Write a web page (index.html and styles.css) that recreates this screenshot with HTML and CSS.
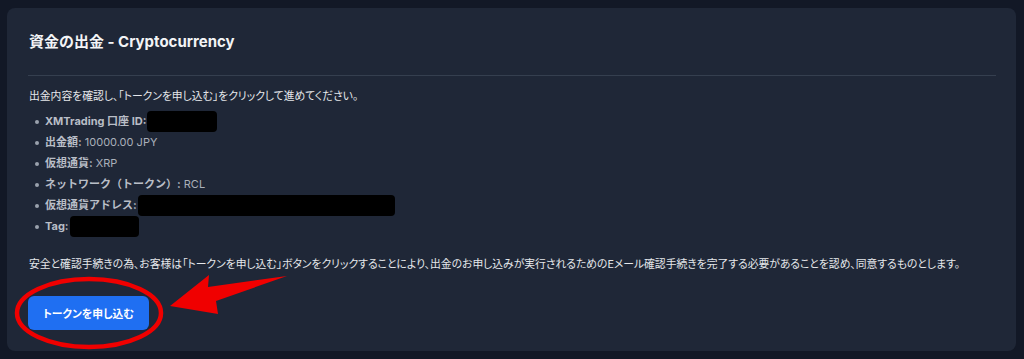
FILE: index.html
```html
<!DOCTYPE html>
<html lang="ja">
<head>
<meta charset="utf-8">
<title>資金の出金 - Cryptocurrency</title>
<link rel="stylesheet" href="styles.css">
</head>
<body>
<div class="page">
  <section class="card">
    <h2 class="title">資金の出金 - Cryptocurrency</h2>
    <hr class="sep">
    <p class="intro">出金内容を確認し、「トークンを申し込む」をクリックして進めてください。</p>
    <ul class="details">
      <li><b>XMTrading 口座 ID:</b><span class="redact w-id"></span></li>
      <li><b>出金額:</b> 10000.00 JPY</li>
      <li><b>仮想通貨:</b> XRP</li>
      <li><b>ネットワーク（トークン）:</b> RCL</li>
      <li><b>仮想通貨アドレス:</b><span class="redact w-addr"></span></li>
      <li><b>Tag:</b><span class="redact w-tag"></span></li>
    </ul>
    <p class="note">安全と確認手続きの為、お客様は「トークンを申し込む」ボタンをクリックすることにより、出金のお申し込みが実行されるためのEメール確認手続きを完了する必要があることを認め、同意するものとします。</p>
    <button class="btn" type="button">トークンを申し込む</button>
  </section>
  <svg class="annot" width="1024" height="359" viewBox="0 0 1024 359" aria-hidden="true">
    <ellipse cx="89" cy="313" rx="72" ry="34" fill="none" stroke="#f00000" stroke-width="4.5"/>
    <polygon points="170,306 209,275 208,287 287,276 216,301 218,314" fill="#f00000"/>
  </svg>
</div>
</body>
</html>
```

FILE: styles.css
```css
html, body {
  margin: 0;
  padding: 0;
  background: #121826;
}
.page {
  position: relative;
  width: 1024px;
  height: 359px;
  padding-top: 8px;
  box-sizing: border-box;
  font-family: Inter, "Noto Sans CJK JP", sans-serif;
}
.card {
  margin-left: 7px;
  width: 1009px;
  height: 343px;
  box-sizing: border-box;
  background: #1f2737;
  border-radius: 8px;
  padding: 0 20px 0 21px;
  overflow: hidden;
}
.title {
  margin: 24px 0 0 1px;
  font-size: 15px;
  line-height: 20px;
  font-weight: 700;
  color: #f3f4f6;
}
.sep {
  margin: 23px 0 0 0;
  border: 0;
  height: 1px;
  background: #353f4f;
}
.intro {
  margin: 10px 0 0 1px;
  font-size: 10.8px;
  line-height: 21px;
  color: #e5e7eb;
  font-feature-settings: "palt";
}
.details {
  list-style: none;
  margin: 4px 0 0 0;
  padding: 0 0 0 17px;
  font-size: 11px;
  line-height: 21px;
  color: #aab0ba;
}
.details li {
  position: relative;
  height: 21px;
  white-space: nowrap;
}
.details li::before {
  content: "";
  position: absolute;
  left: -10px;
  top: 9px;
  width: 4px;
  height: 4px;
  border-radius: 50%;
  background: #9aa1ad;
}
.details b {
  font-weight: 700;
  color: #b9bec7;
}
.redact {
  display: inline-block;
  vertical-align: top;
  height: 21px;
  background: #000;
  border-radius: 4px;
  margin-left: 1px;
}
.w-id { width: 70px; }
.w-addr { width: 257px; }
.w-tag { width: 69px; }
.note {
  margin: 17px 0 0 1px;
  font-size: 10.8px;
  line-height: 21px;
  color: #e5e7eb;
  white-space: nowrap;
  font-feature-settings: "palt";
}
.btn {
  display: block;
  margin: 21px 0 0 0;
  width: 121px;
  height: 34px;
  border: 0;
  border-radius: 6px;
  background: #1f6ff2;
  color: #ffffff;
  font-family: inherit;
  font-feature-settings: "palt";
  font-size: 10.8px;
  font-weight: 700;
  padding: 0;
}
.annot {
  position: absolute;
  left: 0;
  top: 0;
  pointer-events: none;
}
```
